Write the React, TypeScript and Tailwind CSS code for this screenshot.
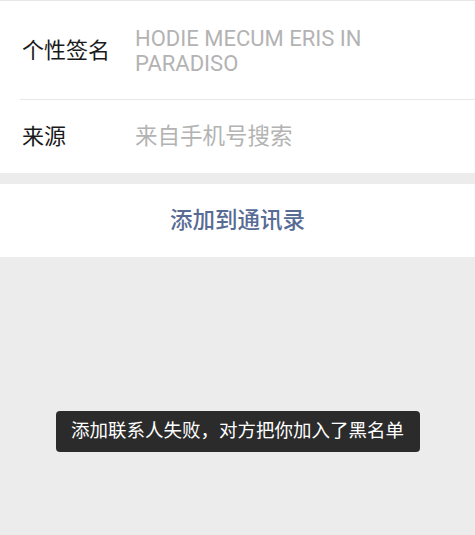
export default function App() {
  const font = { fontFamily: '"Roboto", "Noto Sans CJK SC", sans-serif' }
  return (
    <div className="w-[475px] h-[535px] bg-[#ececec] flex flex-col" style={font}>
      <div className="h-px bg-[#e6e6e6]" />
      <div className="bg-white">
        <div className="flex pl-[22px] pt-[25px] pb-[23px]">
          <div className="w-[113px] shrink-0 text-[22px] leading-[25px] text-[#1a1a1a] pt-[12px]">个性签名</div>
          <div className="text-[22px] leading-[25px] text-[#b3b3b3] pr-[80px]">HODIE MECUM ERIS IN PARADISO</div>
        </div>
        <div className="ml-[20px] h-px bg-[#e8e8e8]" />
        <div className="flex items-center pl-[22px] h-[73px]">
          <div className="w-[113px] shrink-0 text-[22px] text-[#1a1a1a]">来源</div>
          <div className="text-[22.5px] text-[#b3b3b3]">来自手机号搜索</div>
        </div>
      </div>
      <div className="h-[11px]" />
      <div className="bg-white h-[73px] flex items-center justify-center">
        <span className="text-[22.5px] font-medium text-[#576b95]">添加到通讯录</span>
      </div>
      <div className="flex-1 flex justify-center pt-[154px]">
        <div className="h-[41px] w-[364px] rounded-[4px] bg-[#2b2b2b] flex items-center justify-center">
          <span className="text-[18.5px] text-white">添加联系人失败，对方把你加入了黑名单</span>
        </div>
      </div>
    </div>
  )
}
